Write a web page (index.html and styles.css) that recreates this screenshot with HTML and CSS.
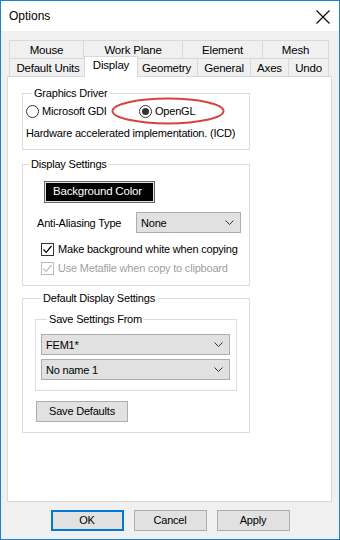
FILE: index.html
```html
<!DOCTYPE html>
<html lang="en">
<head>
  <meta charset="UTF-8" />
  <title>Options</title>
  <link rel="stylesheet" href="styles.css">
</head>
<body>
  <div class="window">
    <div class="titlebar">
      <span class="title">Options</span>
      <svg class="close" viewBox="0 0 14 14" width="14" height="14">
        <path d="M0.5 0.5 L13.5 13.5 M13.5 0.5 L0.5 13.5" stroke="#000" stroke-width="1.1" fill="none"/>
      </svg>
    </div>

    <div class="client">
      <div class="tabs">
        <div class="tab-row">
          <div class="tab t-mouse">Mouse</div>
          <div class="tab t-plane">Work Plane</div>
          <div class="tab t-element">Element</div>
          <div class="tab t-mesh">Mesh</div>
        </div>
        <div class="tab-row">
          <div class="tab t-units">Default Units</div>
          <div class="tab t-display selected">Display</div>
          <div class="tab t-geometry">Geometry</div>
          <div class="tab t-general">General</div>
          <div class="tab t-axes">Axes</div>
          <div class="tab t-undo">Undo</div>
        </div>
      </div>

      <div class="panel">
        <!-- Graphics driver -->
        <fieldset class="group group-driver">
          <legend>Graphics Driver</legend>
          <div class="radio-row">
            <label class="radio radio-gdi"><span class="dot"></span>Microsoft GDI</label>
            <label class="radio"><span class="dot on"></span>OpenGL</label>
            <svg class="mark" viewBox="0 0 114 28" width="114" height="28">
              <ellipse cx="57" cy="14" rx="55.5" ry="12.5" fill="none" stroke="#d9423e" stroke-width="2"/>
            </svg>
          </div>
          <div class="hint">Hardware accelerated implementation. (ICD)</div>
        </fieldset>

        <!-- Display settings -->
        <fieldset class="group group-display">
          <legend>Display Settings</legend>
          <div class="color-btn">Background Color</div>
          <div class="aa-row">
            <span class="aa-label">Anti-Aliasing Type</span>
            <div class="combo combo-aa">None<svg class="chev" viewBox="0 0 9 5" width="9" height="5"><path d="M0.5 0.5 L4.5 4.5 L8.5 0.5" stroke="#333" fill="none"/></svg></div>
          </div>
          <label class="check"><span class="box"><svg viewBox="0 0 11 11" width="11" height="11"><path d="M1.5 5.5 L4.2 8.3 L9.5 2" stroke="#000" stroke-width="1.2" fill="none"/></svg></span>Make background white when copying</label>
          <label class="check disabled"><span class="box"><svg viewBox="0 0 11 11" width="11" height="11"><path d="M1.5 5.5 L4.2 8.3 L9.5 2" stroke="#bcbcbc" stroke-width="1.2" fill="none"/></svg></span>Use Metafile when copy to clipboard</label>
        </fieldset>

        <!-- Default display settings -->
        <fieldset class="group group-defaults">
          <legend>Default Display Settings</legend>
          <fieldset class="group group-from">
            <legend>Save Settings From</legend>
            <div class="combo combo-wide">FEM1*<svg class="chev" viewBox="0 0 9 5" width="9" height="5"><path d="M0.5 0.5 L4.5 4.5 L8.5 0.5" stroke="#333" fill="none"/></svg></div>
            <div class="combo combo-wide second">No name 1<svg class="chev" viewBox="0 0 9 5" width="9" height="5"><path d="M0.5 0.5 L4.5 4.5 L8.5 0.5" stroke="#333" fill="none"/></svg></div>
          </fieldset>
          <div class="btn btn-save">Save Defaults</div>
        </fieldset>
      </div>

      <div class="actions">
        <div class="btn default">OK</div>
        <div class="btn">Cancel</div>
        <div class="btn">Apply</div>
      </div>
    </div>
  </div>
</body>
</html>
```

FILE: styles.css
```css
* {
  box-sizing: border-box;
}
body {
  margin: 0;
  font-family: "Liberation Sans", Arial, sans-serif;
  font-size: 11px;
  letter-spacing: -0.2px;
  color: #000;
  background: #fff;
  white-space: nowrap;
}
.window {
  width: 340px;
  height: 540px;
  border: 1px solid #1883d7;
  background: #f0f0f0;
  display: flex;
  flex-direction: column;
}
.titlebar {
  height: 30px;
  background: #fff;
  display: flex;
  align-items: center;
  justify-content: space-between;
  padding: 0 9px 0 8px;
  flex: none;
}
.title {
  font-size: 12px;
  letter-spacing: 0;
}
.close {
  display: block;
  margin-top: 1px;
}
.client {
  flex: 1;
  padding: 9px 7px 0 6px;
  display: flex;
  flex-direction: column;
}

/* tabs */
.tabs {
  margin-left: 2px;
}
.tab-row {
  display: flex;
  height: 19px;
}
.tab-row + .tab-row {
  margin-top: -1px;
}
.tab {
  height: 19px;
  border: 1px solid #d9d9d9;
  background: #f0f0f0;
  margin-left: -1px;
  text-align: center;
  line-height: 18px;
  font-size: 11.5px;
}
.tab:first-child {
  margin-left: 0;
}
.tab.selected {
  position: relative;
  z-index: 2;
  height: 21px;
  margin: -2px -2px 0 -3px;
  background: #fff;
  border-bottom: none;
  line-height: 17px;
}
.t-mouse { width: 75px; }
.t-plane { width: 100px; }
.t-element { width: 81px; }
.t-mesh { width: 67px; }
.t-units { width: 78px; }
.t-display { width: 54px; }
.t-geometry { width: 63px; }
.t-general { width: 54px; }
.t-axes { width: 39px; }
.t-undo { width: 41px; }

.panel {
  width: 325px;
  height: 426px;
  margin-top: -1px;
  background: #fff;
  border: 1px solid #d9d9d9;
  padding: 9px 0 0 14px;
}

/* group boxes */
.group {
  margin: 0;
  padding: 0;
  border: 1px solid #dcdcdc;
  min-width: 0;
}
.group legend {
  padding: 0 2px;
  margin-left: 6px;
  line-height: 14px;
}
.group-driver,
.group-display,
.group-defaults {
  width: 228px;
}
.group-driver {
  padding: 0 0 8px 3px;
}
.group-display {
  margin-top: 7px;
  padding: 0 0 9px 0;
}
.group-defaults {
  margin-top: 5px;
  padding: 0 0 10px 12px;
}

.radio-row {
  position: relative;
  display: flex;
  margin-top: 3px;
  height: 16px;
  align-items: center;
}
.radio {
  display: flex;
  align-items: center;
  gap: 3px;
}
.radio-gdi {
  width: 113px;
}
.dot {
  width: 13px;
  height: 13px;
  border: 1px solid #333;
  border-radius: 50%;
  background: #fff;
  display: flex;
  align-items: center;
  justify-content: center;
}
.dot.on::after {
  content: "";
  width: 7px;
  height: 7px;
  border-radius: 50%;
  background: #333;
}
.mark {
  position: absolute;
  left: 85px;
  top: -6px;
}
.hint {
  margin-top: 6px;
  line-height: 16px;
}

.color-btn {
  width: 111px;
  height: 22px;
  margin: 10px 0 0 21px;
  border: 1px solid #646464;
  box-shadow: inset 0 0 0 1px #e3e3e3;
  background: #000;
  padding: 0 0 0 8px;
  color: #fff;
  line-height: 19px;
  font-size: 11.5px;
  position: relative;
}
.color-btn::after {
  content: "";
  position: absolute;
  inset: 1px;
  border: 1px solid #000;
}
.aa-row {
  display: flex;
  align-items: center;
  margin: 9px 0 0 14px;
}
.aa-label {
  width: 99px;
}
.combo {
  height: 21px;
  background: #e1e1e1;
  border: 1px solid #adadad;
  display: flex;
  align-items: center;
  justify-content: space-between;
  padding: 0 6px 0 4px;
}
.combo-aa {
  width: 105px;
}
.chev {
  display: block;
}
.check {
  display: flex;
  align-items: center;
  gap: 4px;
  height: 16px;
  margin: 8px 0 0 18px;
}
.check + .check {
  margin-top: 3px;
}
.box {
  width: 13px;
  height: 13px;
  border: 1px solid #333;
  background: #fff;
  display: flex;
  align-items: center;
  justify-content: center;
}
.check.disabled {
  color: #a0a0a0;
}
.check.disabled .box {
  border-color: #bcbcbc;
}

.group-from {
  width: 202px;
  margin-top: 7px;
  padding: 0 0 10px 5px;
}
.combo-wide {
  width: 189px;
  margin-top: 8px;
}
.combo-wide.second {
  margin-top: 4px;
}

/* buttons */
.btn {
  width: 73px;
  height: 21px;
  background: #e1e1e1;
  border: 1px solid #adadad;
  text-align: center;
  line-height: 19px;
}
.btn-save {
  width: 92px;
  margin: 10px 0 0 1px;
}
.btn.default {
  border: 2px solid #0078d7;
  line-height: 17px;
}
.actions {
  display: flex;
  justify-content: center;
  gap: 10px;
  margin-top: 8px;
  padding-left: 1px;
}
```
